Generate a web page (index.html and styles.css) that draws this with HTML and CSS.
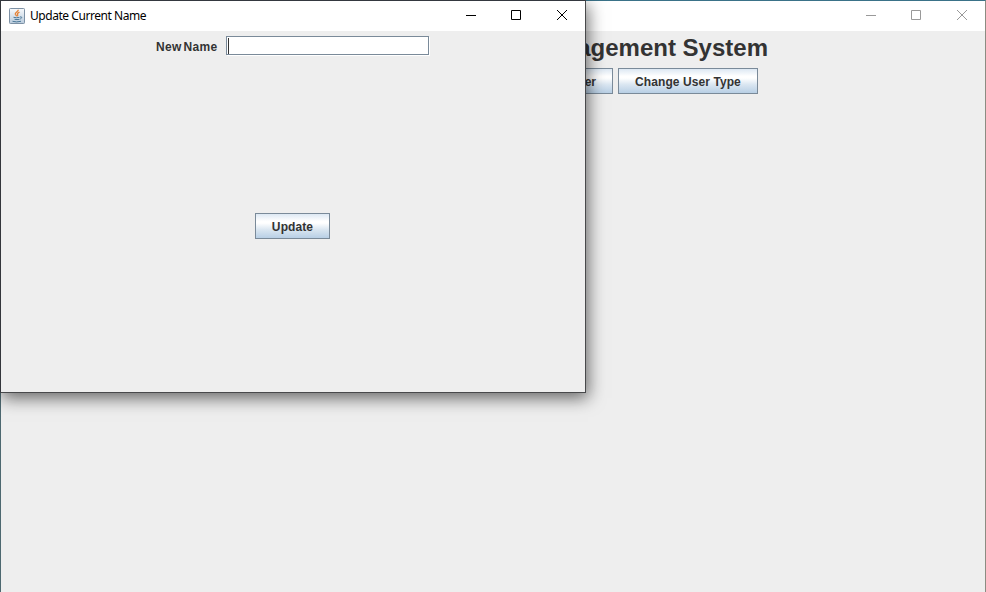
FILE: index.html
```
<!DOCTYPE html>
<html lang="en">
<head>
<meta charset="utf-8">
<title>Update Current Name</title>
<link rel="stylesheet" href="styles.css">
</head>
<body>
<main class="desktop">
  <section class="window main-window">
    <header class="titlebar inactive">
      <div class="controls">
        <svg viewBox="0 0 46 30"><path d="M17 14.500h10"/></svg>
        <svg viewBox="0 0 45 30"><path d="M16.500 9.500h9v9h-9z"/></svg>
        <svg viewBox="0 0 46 30"><path d="M17 9l10 10M27 9l-10 10"/></svg>
      </div>
    </header>
    <div class="main-content">
      <h1>Management System</h1>
      <div class="actions">
        <button class="btn user">User</button>
        <button class="btn change">Change User Type</button>
      </div>
    </div>
  </section>
  <section class="window dialog">
    <header class="titlebar">
      <svg class="java" viewBox="0 0 16 16">
        <defs><linearGradient id="tile" x2="0" y2="1"><stop stop-color="#f8fafc"/><stop offset="1" stop-color="#b9cbdc"/></linearGradient></defs>
        <rect x=".5" y=".5" width="15" height="15" rx=".8" fill="url(#tile)" stroke="#7d91a5"/>
        <path d="M9.300 1.700C9.500 3.700 5.600 4.300 6.300 6.300L7.700 8.200M10.500 4.200C8.400 5.200 8 6 8.800 7.100L8.300 8.300" fill="none" stroke="#e58236" stroke-width="1.300"/>
        <path d="M4.500 9.300q3 .9 6 0M5.500 11.300q2.500.6 5 0M3.500 13.300q4 1.200 8.500 0M11 9c2.200-.7 2.300 1.200.2 2" fill="none" stroke="#4c7898"/>
      </svg>
      <span class="caption">Update Current Name</span>
      <div class="controls">
        <svg viewBox="0 0 46 30"><path d="M17 14.500h10"/></svg>
        <svg viewBox="0 0 45 30"><path d="M16.500 9.500h9v9h-9z"/></svg>
        <svg viewBox="0 0 46 30"><path d="M17 9l10 10M27 9l-10 10"/></svg>
      </div>
    </header>
    <div class="form">
      <div class="field"><label for="name">New Name</label><div class="input" id="name"><i class="caret"></i></div></div>
      <button class="btn update">Update</button>
    </div>
  </section>
</main>
</body>
</html>
```
FILE: styles.css
```
* { box-sizing: border-box; }
body { margin: 0; background: #ededed; font-family: "Liberation Sans", Arial, sans-serif; color: #333; }
.desktop { position: relative; width: 986px; height: 592px; overflow: hidden; }
.window { display: flex; flex-direction: column; background: #eee; }
.main-window { height: 592px; border: 1px solid #3a7288; border-bottom: 0; border-left-color: #4d6870; border-right-color: #8c8c82; }
.dialog { position: absolute; left: 0; top: 0; width: 586px; height: 393px; border: 1px solid #48494b; border-top-color: #34383f; border-left-color: #33363b; box-shadow: 2px 5px 16px rgba(0, 0, 0, .58); }
.titlebar { display: flex; align-items: center; height: 30px; flex: none; background: #fff; color: #000; }
.inactive { color: #999; }
.controls { display: flex; margin-left: auto; height: 30px; margin-right: -1px; }
.controls svg { width: 46px; height: 30px; fill: none; stroke: currentColor; stroke-width: 1; }
.controls svg:nth-child(2) { width: 45px; }
.java { width: 16px; height: 16px; margin-left: 8px; }
.caption { margin-left: 5px; font: 12px/30px "Noto Sans", "Open Sans", sans-serif; letter-spacing: -.45px; white-space: nowrap; }
.main-content { width: 768px; display: flex; flex-direction: column; align-items: flex-end; }
h1 { margin: 3px 1px 0 0; font-size: 24px; line-height: 28px; font-weight: bold; white-space: nowrap; }
.actions { display: flex; gap: 5px; margin: 6px 11px 0 0; }
.btn { height: 26px; padding: 1px 0 0; border: 1px solid #7a8a99; border-radius: 0; background: linear-gradient(#dde8f3 0, #fff 30%, #fff 38%, #dae6f1 65%, #b8cfe5 100%); font: bold 12px "Liberation Sans", Arial, sans-serif; color: #333; white-space: nowrap; }
.change { width: 140px; letter-spacing: .08px; }
.user { width: 75px; padding-right: 16px; text-align: right; }
.form { flex: 1; display: flex; flex-direction: column; align-items: center; padding: 5px 1px 0 0; }
.field { display: flex; gap: 8px; width: 273px; height: 20px; font-size: 12px; font-weight: bold; line-height: 23px; }
.field label { width: 62px; white-space: nowrap; letter-spacing: .35px; word-spacing: -2px; }
.input { width: 203px; height: 19px; padding: 1px; border: 1px solid #7a8a99; background: #fff; box-shadow: 1px 1px #fff; }
.caret { display: block; width: 1px; height: 16px; background: #333; }
.update { width: 75px; margin-top: 157px; letter-spacing: .1px; }
```
